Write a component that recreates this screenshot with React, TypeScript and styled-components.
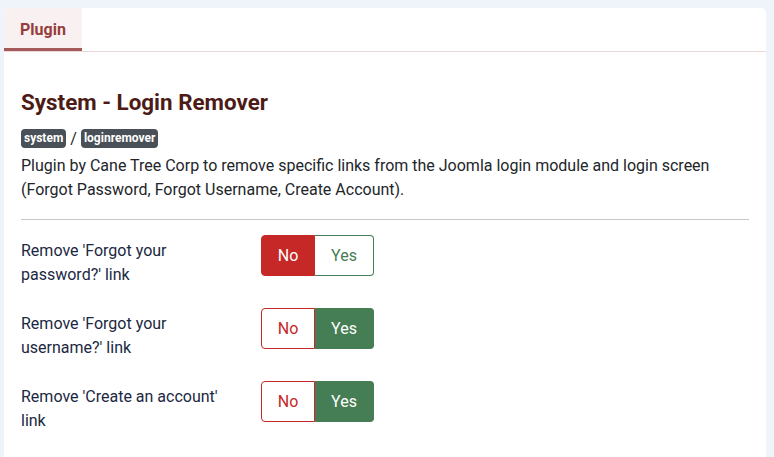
import React from 'react';
import styled, { createGlobalStyle } from 'styled-components';

const GlobalStyle = createGlobalStyle`
  body {
    margin: 0;
    background-color: #eff3fa;
    font-family: 'Roboto', 'Liberation Sans', sans-serif;
    color: #22262a;
  }
`;

const Page = styled.div`
  padding: 8px 8px 0 4px;
  height: 457px;
  box-sizing: border-box;
  overflow: hidden;
`;

const Card = styled.div`
  background-color: #ffffff;
  border-radius: 5px 5px 0 0;
  min-height: 460px;
`;

const TabBar = styled.div`
  display: flex;
  border-bottom: 1px solid #ead7d8;
`;

const Tab = styled.div<{ active?: boolean }>`
  height: 43px;
  box-sizing: border-box;
  padding: 3px 16px 0 16px;
  display: flex;
  align-items: center;
  font-size: 16px;
  font-weight: 700;
  color: #973c3c;
  background-color: ${(props) => (props.active ? '#f9f1f1' : 'transparent')};
  border-bottom: ${(props) => (props.active ? '3px solid #a45a5a' : 'none')};
  border-top-left-radius: 5px;
`;

const Body = styled.div`
  padding: 37px 17px 0 17px;
`;

const Title = styled.h2`
  margin: 0;
  font-size: 22.4px;
  line-height: 27px;
  font-weight: 700;
  color: #4d1b16;
`;

const BadgeRow = styled.div`
  display: flex;
  align-items: center;
  gap: 4px;
  margin-top: 13px;
  font-size: 16px;
`;

const Badge = styled.span`
  display: inline-block;
  background-color: #495057;
  color: #ffffff;
  font-size: 12px;
  font-weight: 700;
  line-height: 19px;
  padding: 0 3px;
  border-radius: 4px;
`;

const Slash = styled.span`
  color: #22262a;
  font-size: 16px;
  line-height: 18px;
`;

const Description = styled.p`
  margin: 6px 0 0 0;
  font-size: 16px;
  line-height: 24px;
  color: #22262a;
`;

const Divider = styled.hr`
  border: none;
  border-top: 1px solid #c8c8c8;
  margin: 17px 0 15px 0;
`;

const FieldList = styled.div`
  display: flex;
  flex-direction: column;
  gap: 21px;
`;

const FieldRow = styled.div`
  display: grid;
  grid-template-columns: 240px auto;
  align-items: start;
`;

const Label = styled.label`
  padding-top: 4px;
  font-size: 16px;
  line-height: 24px;
  color: #1b2842;
  max-width: 205px;
`;

const Toggle = styled.div`
  display: inline-flex;
`;

const ToggleButton = styled.button<{ active: boolean; tone: 'no' | 'yes' }>`
  height: 41px;
  box-sizing: border-box;
  padding: 0 15px;
  font-family: 'Roboto', 'Liberation Sans', sans-serif;
  font-size: 16px;
  cursor: pointer;
  border: 1px solid ${(props) => (props.tone === 'no' ? '#c52827' : '#457d54')};
  background-color: ${(props) =>
    props.active ? (props.tone === 'no' ? '#c52827' : '#457d54') : '#ffffff'};
  color: ${(props) => (props.active ? '#ffffff' : props.tone === 'no' ? '#c52827' : '#457d54')};
  border-radius: ${(props) => (props.tone === 'no' ? '4px 0 0 4px' : '0 4px 4px 0')};
  ${(props) => (props.tone === 'no' ? 'width: 54px;' : 'width: 59px; border-left: none;')}
`;

interface Field {
  label: string;
  value: boolean;
}

const fields: Field[] = [
  { label: "Remove 'Forgot your password?' link", value: false },
  { label: "Remove 'Forgot your username?' link", value: true },
  { label: "Remove 'Create an account' link", value: true },
];

function YesNo({ initial }: { initial: boolean }): JSX.Element {
  const [value, setValue] = React.useState(initial);
  return (
    <Toggle>
      <ToggleButton tone="no" active={!value} onClick={() => setValue(false)}>
        No
      </ToggleButton>
      <ToggleButton tone="yes" active={value} onClick={() => setValue(true)}>
        Yes
      </ToggleButton>
    </Toggle>
  );
}

export default function App(): JSX.Element {
  return (
    <Page>
      <GlobalStyle />
      <Card>
        <TabBar>
          <Tab active>Plugin</Tab>
        </TabBar>
        <Body>
          <Title>System - Login Remover</Title>
          <BadgeRow>
            <Badge>system</Badge>
            <Slash>/</Slash>
            <Badge>loginremover</Badge>
          </BadgeRow>
          <Description>
            Plugin by Cane Tree Corp to remove specific links from the Joomla login module and login
            screen (Forgot Password, Forgot Username, Create Account).
          </Description>
          <Divider />
          <FieldList>
            {fields.map((field) => (
              <FieldRow key={field.label}>
                <Label>{field.label}</Label>
                <YesNo initial={field.value} />
              </FieldRow>
            ))}
          </FieldList>
        </Body>
      </Card>
    </Page>
  );
}
